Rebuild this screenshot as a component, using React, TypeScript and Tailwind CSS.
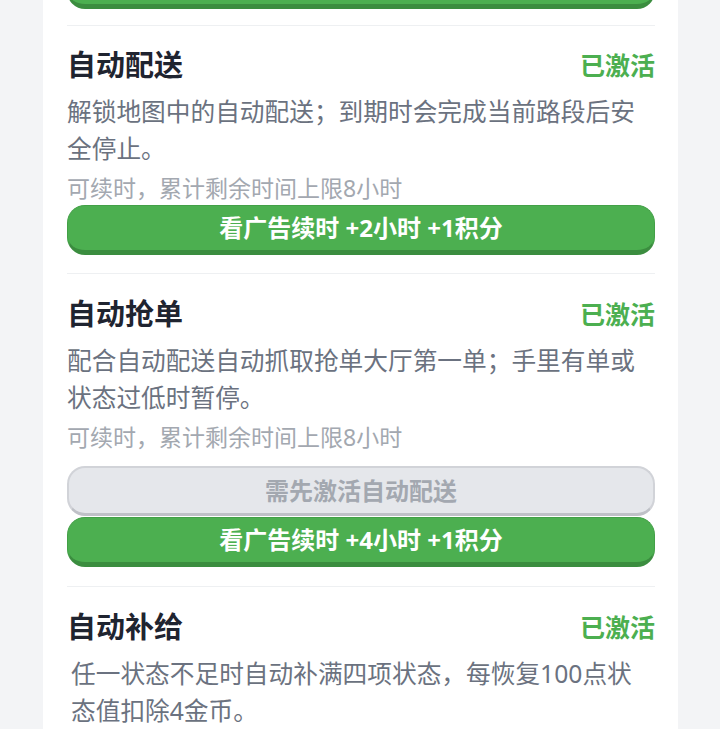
import React from "react";

const font = { fontFamily: '"Noto Sans", "Noto Sans CJK SC", sans-serif' };

function GreenButton({ label, className = "" }: { label: string; className?: string }) {
  return (
    <div
      className={`flex h-[50px] w-full items-center justify-center rounded-[18px] border border-[#43a047] border-b-[5px] border-b-[#3b8d3f] bg-[#4caf50] text-[24px] font-bold text-white ${className}`}
    >
      {label}
    </div>
  );
}

function GrayButton({ label, className = "" }: { label: string; className?: string }) {
  return (
    <div
      className={`flex h-[50px] w-full items-center justify-center rounded-[18px] border-2 border-[#d1d3d8] border-b-[3px] border-b-[#bfc1c7] bg-[#e5e7eb] text-[24px] font-bold text-[#a3a8b0] ${className}`}
    >
      {label}
    </div>
  );
}

function Header({ title }: { title: string }) {
  return (
    <div className="flex h-[40px] items-center justify-between">
      <span className="text-[29px] font-bold leading-[40px] text-[#1f2430]">{title}</span>
      <span className="text-[25px] font-bold leading-[40px] text-[#4caf50]">已激活</span>
    </div>
  );
}

export default function App() {
  return (
    <div className="h-[729px] overflow-hidden bg-[#f3f4f6]" style={font}>
      <div className="ml-[43px] w-[635px] bg-white pl-6 pr-[23px]">
        {/* tail of previous section */}
        <div className="-mt-[41px] pb-4">
          <div className="h-[50px] w-full rounded-[18px] border border-[#43a047] border-b-[5px] border-b-[#3b8d3f] bg-[#4caf50]" />
        </div>

        {/* 自动配送 */}
        <div className="border-t border-[#eef0f2] pb-[18px] pt-[19px]">
          <Header title="自动配送" />
          <p className="mt-2 text-[24.7px] leading-[37px] text-[#6b7280]">
            解锁地图中的自动配送；到期时会完成当前路段后安全停止。
          </p>
          <p className="mt-[6px] text-[23px] leading-[30px] text-[#a3a8b0]">
            可续时，累计剩余时间上限8小时
          </p>
          <GreenButton label="看广告续时 +2小时 +1积分" className="mt-[2px]" />
        </div>

        {/* 自动抢单 */}
        <div className="border-t border-[#eef0f2] pb-[19px] pt-5">
          <Header title="自动抢单" />
          <p className="mt-2 text-[24.7px] leading-[37px] text-[#6b7280]">
            配合自动配送自动抓取抢单大厅第一单；手里有单或状态过低时暂停。
          </p>
          <p className="mt-[6px] text-[23px] leading-[30px] text-[#a3a8b0]">
            可续时，累计剩余时间上限8小时
          </p>
          <GrayButton label="需先激活自动配送" className="mt-[14px]" />
          <GreenButton label="看广告续时 +4小时 +1积分" className="mt-[1px]" />
        </div>

        {/* 自动补给 */}
        <div className="border-t border-[#eef0f2] pb-6 pt-5">
          <Header title="自动补给" />
          <p className="mt-2 pl-1 text-[24.7px] leading-[37px] text-[#6b7280]">
            任一状态不足时自动补满四项状态，每恢复100点状
            <br />
            态值扣除4金币。
          </p>
        </div>
      </div>
    </div>
  );
}
